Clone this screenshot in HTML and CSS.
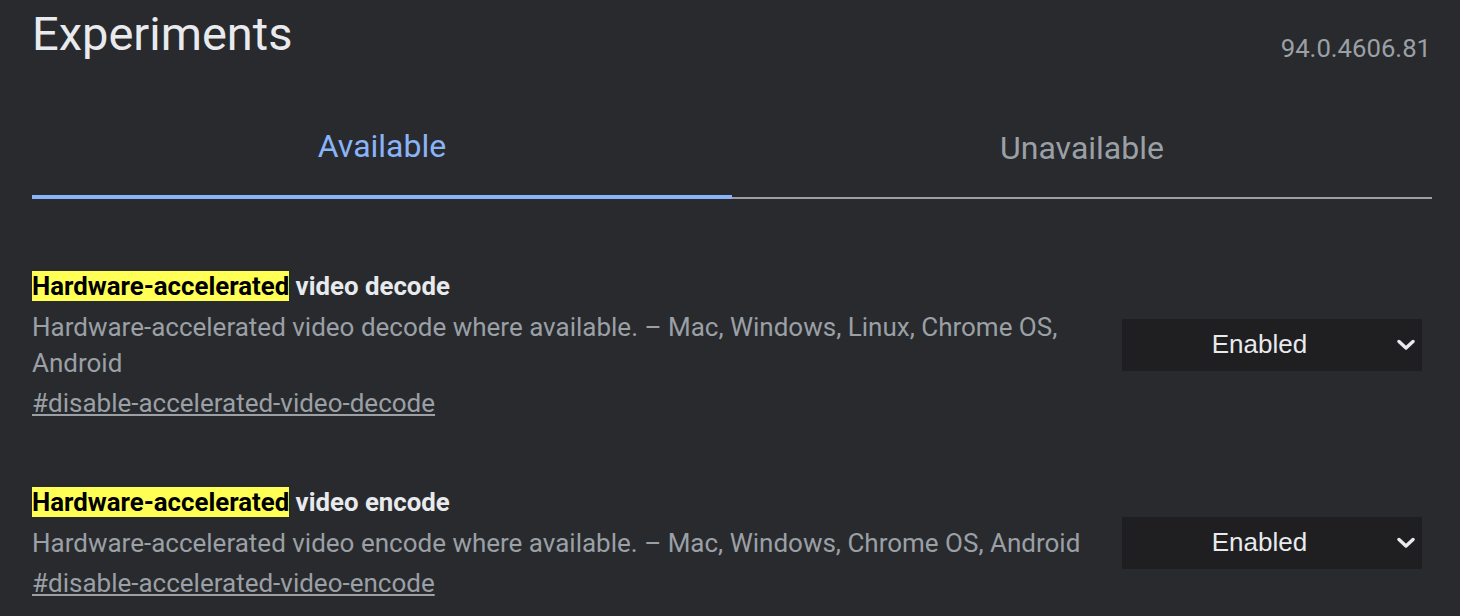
FILE: index.html
```html
<!DOCTYPE html>
<html>
<head>
<meta charset="utf-8">
<link rel="stylesheet" href="styles.css">
</head>
<body>
<div class="page">
  <header class="header">
    <h1 class="title">Experiments</h1>
    <span class="version">94.0.4606.81</span>
  </header>
  <nav class="tabs">
    <div class="tab tab-active">Available</div>
    <div class="tab">Unavailable</div>
  </nav>
  <section class="flags">
    <div class="flag">
      <div class="flag-info">
        <div class="flag-name"><mark class="hl">Hardware-accelerated</mark> video decode</div>
        <p class="flag-desc">Hardware-accelerated video decode where available. – Mac, Windows, Linux, Chrome OS, Android</p>
        <a class="flag-link" href="#">#disable-accelerated-video-decode</a>
      </div>
      <div class="select">
        <span class="select-text">Enabled</span>
        <svg class="chev" width="18" height="12" viewBox="0 0 18 12"><path d="M2 2.5 L9 9 L16 2.5" fill="none" stroke="#e8eaed" stroke-width="3.4" stroke-linecap="round" stroke-linejoin="round"/></svg>
      </div>
    </div>
    <div class="flag flag-second">
      <div class="flag-info">
        <div class="flag-name"><mark class="hl">Hardware-accelerated</mark> video encode</div>
        <p class="flag-desc">Hardware-accelerated video encode where available. – Mac, Windows, Chrome OS, Android</p>
        <a class="flag-link" href="#">#disable-accelerated-video-encode</a>
      </div>
      <div class="select">
        <span class="select-text">Enabled</span>
        <svg class="chev" width="18" height="12" viewBox="0 0 18 12"><path d="M2 2.5 L9 9 L16 2.5" fill="none" stroke="#e8eaed" stroke-width="3.4" stroke-linecap="round" stroke-linejoin="round"/></svg>
      </div>
    </div>
  </section>
</div>
</body>
</html>
```
FILE: styles.css
```css
html, body {
  margin: 0;
  padding: 0;
  background: #292a2d;
  height: 100%;
  overflow: hidden;
}
body {
  font-family: Roboto, "Liberation Sans", sans-serif;
  color: #e8eaed;
}
.page {
  padding: 0 28px 0 32px;
}
.header {
  display: flex;
  justify-content: space-between;
  align-items: flex-start;
}
.title {
  margin: 0;
  font-size: 47px;
  font-weight: 400;
  line-height: 56px;
  padding-top: 6px;
  color: #e8eaed;
}
.version {
  font-size: 25.7px;
  color: #9aa0a6;
  line-height: 30px;
  padding-top: 33px;
  padding-right: 1px;
}
.tabs {
  display: grid;
  grid-template-columns: 1fr 1fr;
  align-items: end;
  margin-top: 64px;
}
.tab {
  text-align: center;
  font-size: 32px;
  line-height: 38px;
  color: #9aa0a6;
  padding-bottom: 30px;
  border-bottom: 2px solid #9aa0a6;
}
.tab-active {
  color: #8ab4f8;
  border-bottom: 4px solid #8ab4f8;
  padding-bottom: 30px;
}
.flags {
  padding-top: 69px;
}
.flag {
  display: flex;
  align-items: center;
  justify-content: space-between;
  gap: 20px;
}
.flag-second {
  margin-top: 63px;
}
.flag-info {
  flex: 1;
  min-width: 0;
}
.flag-name {
  font-size: 25.8px;
  font-weight: 700;
  line-height: 36px;
  color: #e8eaed;
}
.hl {
  background: #ffff55;
  color: #000;
  padding: 0;
}
.flag-desc {
  margin: 0;
  font-size: 26px;
  line-height: 36px;
  color: #9aa0a6;
  padding-top: 5px;
}
.flag-link {
  display: inline-block;
  font-size: 26px;
  line-height: 36px;
  color: #9aa0a6;
  text-decoration: underline;
  margin-top: 4px;
}
.select {
  flex: none;
  width: 275px;
  padding-right: 25px;
  height: 52px;
  background: #1f1f21;
  display: flex;
  align-items: center;
  justify-content: center;
  position: relative;
  margin-right: 10px;
}
.select-text {
  font-family: "Liberation Sans", Arial, sans-serif;
  font-size: 26px;
  color: #e8eaed;
}
.chev {
  position: absolute;
  right: 7px;
  top: 20px;
}
```
